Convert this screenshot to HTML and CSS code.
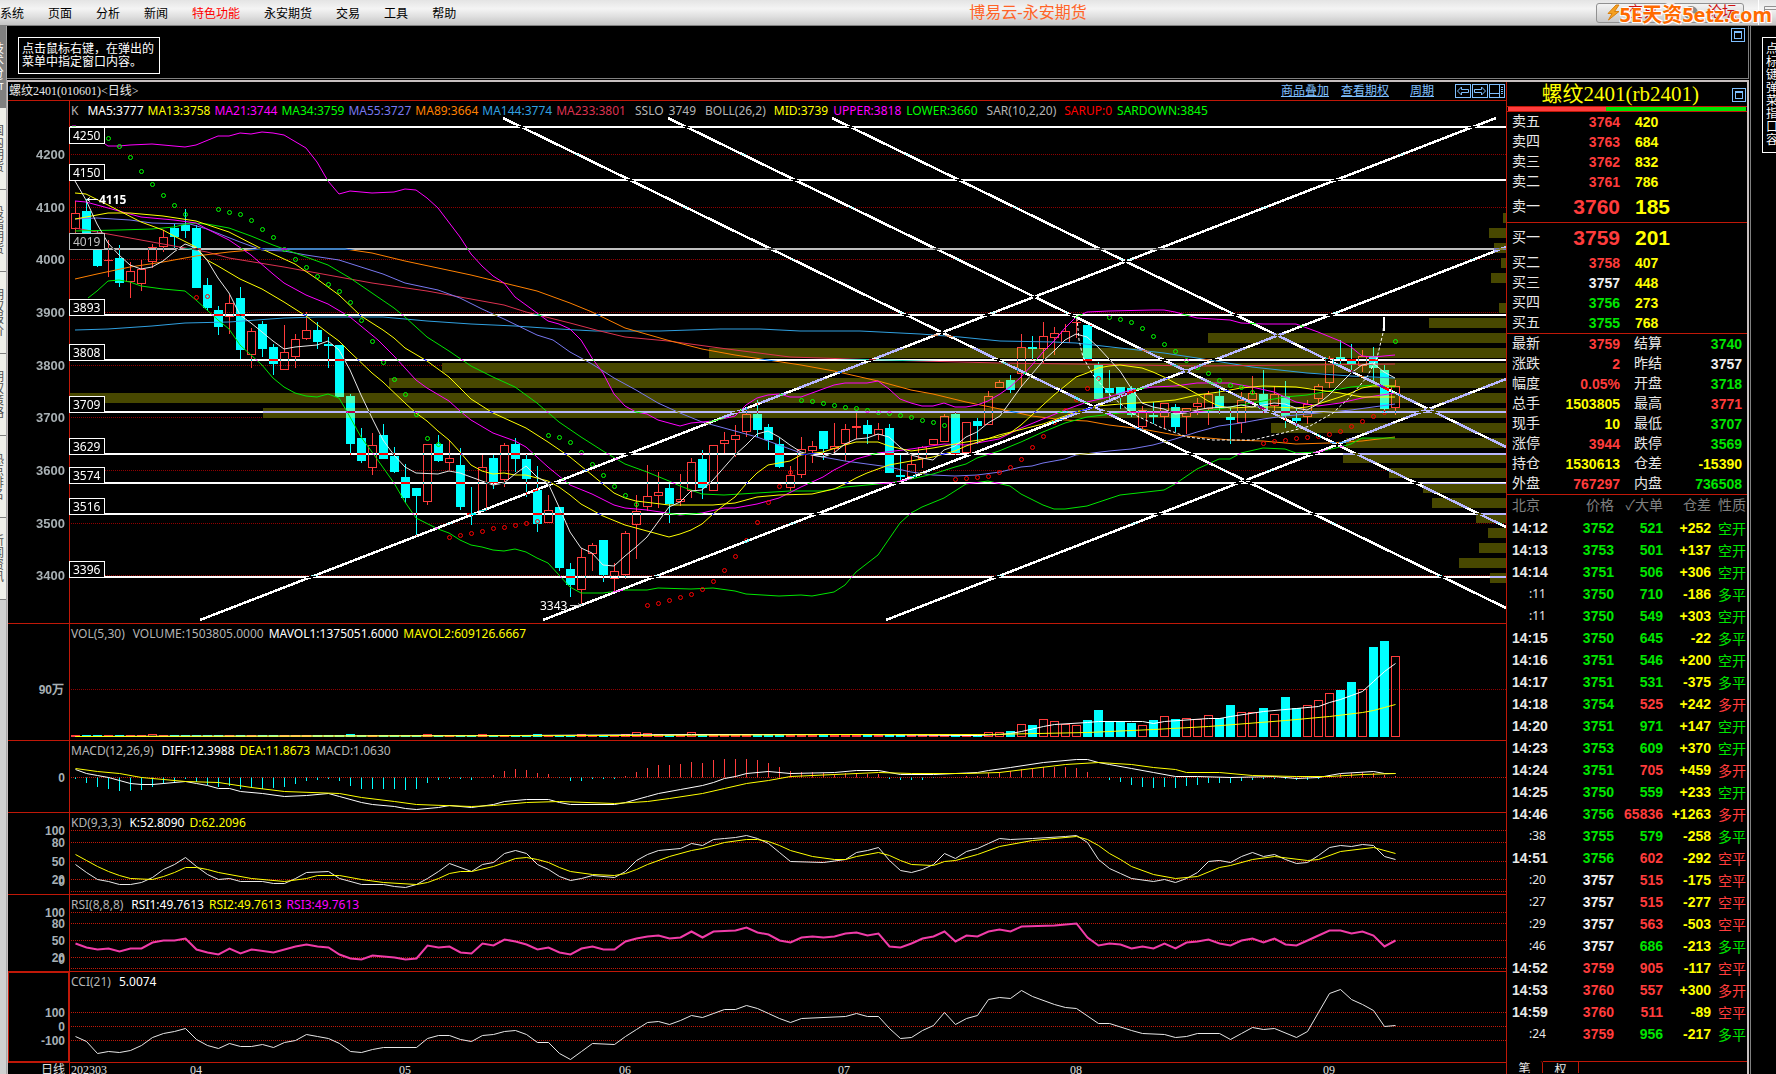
FILE: index.html
```html
<!DOCTYPE html>
<html lang="zh-CN">
<head>
<meta charset="utf-8">
<title>博易云-永安期货</title>
<link rel="stylesheet" href="styles.css">
</head>
<body>
<header class="menubar">
  <nav class="menu">
    <a href="#">系统</a><a href="#">页面</a><a href="#">分析</a><a href="#">新闻</a><a href="#" class="hot">特色功能</a><a href="#">永安期货</a><a href="#">交易</a><a href="#">工具</a><a href="#">帮助</a>
  </nav>
  <h1 class="app-title">博易云-永安期货</h1>
  <div class="actions">
    <button class="action" type="button">
      <svg width="13" height="18" viewBox="0 0 13 18"><path d="M9 1 1 9.500h4L1.500 16 12 7.500H7.500L12 1z" fill="#f5a020" stroke="#d88010"/></svg>
      <span>交易</span>
    </button>
    <button class="action" type="button">
      <svg width="16" height="16" viewBox="0 0 16 16"><circle cx="8" cy="8" r="7" fill="#8a8a8a"/><circle cx="6" cy="6" r="2.500" fill="#c4c4c4"/><circle cx="11" cy="10" r="2" fill="#b0b0b0"/></svg>
      <span>论坛</span>
    </button>
    <div class="window-tools"><svg width="12" height="14" viewBox="0 0 12 14"><path d="M.5 13.500V.5H12M.5 3.500H12" fill="none" stroke="#909090"/></svg></div>
    <span class="watermark">5E天资5etz.com</span>
  </div>
</header>

<div class="workspace">
  <nav class="rail">
    <a href="#" class="tab active"><span>技术分析</span></a>
    <a href="#" class="tab"><span>国内期货</span></a>
    <a href="#" class="tab"><span>股指期货</span></a>
    <a href="#" class="tab"><span>期权报价</span></a>
    <a href="#" class="tab"><span>期权策略</span></a>
    <a href="#" class="tab"><span>热点排名</span></a>
    <a href="#" class="tab"><span>新闻资讯</span></a>
  </nav>

  <main class="center">
    <section class="blank">
      <p class="hint">点击鼠标右键，在弹出的<br>菜单中指定窗口内容。</p>
      <button class="restore" type="button" aria-label="还原"><svg width="14" height="14" viewBox="0 0 14 14"><rect x="0.500" y="0.500" width="13" height="13"/><rect x="3.500" y="3.500" width="7" height="7"/><path d="M3 4.500h8"/></svg></button>
    </section>

    <div class="terminal">
      <section class="charts">
        <div class="chart-bar">
          <h2>螺纹2401(010601)&lt;日线&gt;</h2>
          <div class="tools">
            <a href="#">商品叠加</a><a href="#">查看期权</a><a href="#" class="period">周期</a>
            <div class="icons">
              <button type="button" aria-label="左移"><svg width="16" height="14" viewBox="0 0 16 14"><rect x="0.500" y="0.500" width="15" height="13"/><path d="M2.500 7 6.500 3v2.500h7v3h-7V11z"/></svg></button>
              <button type="button" aria-label="右移"><svg width="16" height="14" viewBox="0 0 16 14"><rect x="0.500" y="0.500" width="15" height="13"/><path d="M13.500 7 9.500 3v2.500h-7v3h7V11z"/></svg></button>
              <button type="button" aria-label="布局"><svg width="16" height="14" viewBox="0 0 16 14"><rect x="0.500" y="0.500" width="15" height="13"/><path d="M10.500 0v14M0 9.500h10M12 3.500h2M12 5.500h2M12 7.500h2M12 9.500h2"/></svg></button>
            </div>
          </div>
        </div>

        <div class="panel">
          <svg id="kline" viewBox="8 101 1498 522"></svg>
          <div class="legend first">
            <span class="grey">K</span>
            <span class="set averages"><span class="white">MA5:3777</span><span class="yellow">MA13:3758</span><span class="magenta">MA21:3744</span><span class="green">MA34:3759</span><span class="violet">MA55:3727</span><span class="orange">MA89:3664</span><span class="blue">MA144:3774</span><span class="crimson">MA233:3801</span></span>
            <span class="set"><span class="grey">SSLO</span><span class="grey">3749</span></span>
            <span class="set"><span class="grey name">BOLL(26,2)</span><span class="yellow">MID:3739</span><span class="magenta">UPPER:3818</span><span class="green">LOWER:3660</span></span>
            <span class="set"><span class="grey name">SAR(10,2,20)</span><span class="red">SARUP:0</span><span class="green">SARDOWN:3845</span></span>
          </div>
        </div>
        <div class="panel">
          <svg id="vol" viewBox="8 624 1498 116"></svg>
          <div class="legend"><span class="grey name">VOL(5,30)</span><span class="grey">VOLUME:1503805.0000</span><span class="white">MAVOL1:1375051.6000</span><span class="yellow">MAVOL2:609126.6667</span></div>
        </div>
        <div class="panel">
          <svg id="macd" viewBox="8 741 1498 71"></svg>
          <div class="legend"><span class="grey name">MACD(12,26,9)</span><span class="white">DIFF:12.3988</span><span class="yellow">DEA:11.8673</span><span class="grey">MACD:1.0630</span></div>
        </div>
        <div class="panel">
          <svg id="kd" viewBox="8 813 1498 81"></svg>
          <div class="legend"><span class="grey name">KD(9,3,3)</span><span class="white">K:52.8090</span><span class="yellow">D:62.2096</span></div>
        </div>
        <div class="panel">
          <svg id="rsi" viewBox="8 895 1498 76"></svg>
          <div class="legend"><span class="grey name">RSI(8,8,8)</span><span class="white">RSI1:49.7613</span><span class="yellow">RSI2:49.7613</span><span class="magenta">RSI3:49.7613</span></div>
        </div>
        <div class="panel">
          <svg id="cci" viewBox="8 972 1498 90"></svg>
          <div class="legend"><span class="grey name">CCI(21)</span><span class="white">5.0074</span></div>
        </div>
        <svg class="dates" id="dates" viewBox="8 1063 1498 11"></svg>
      </section>

      <aside class="quote">
        <div class="quote-head">
          <h2>螺纹2401(rb2401)</h2>
          <button class="restore" type="button" aria-label="还原"><svg width="14" height="14" viewBox="0 0 14 14"><rect x="0.500" y="0.500" width="13" height="13"/><rect x="3.500" y="3.500" width="7" height="7"/><path d="M3 4.500h8"/></svg></button>
        </div>
        <div class="ratio"><i class="bid"></i><i class="ask"></i></div>
        <table class="book">
          <tr><th>卖五</th><td class="r">3764</td><td class="y">420</td></tr>
          <tr><th>卖四</th><td class="r">3763</td><td class="y">684</td></tr>
          <tr><th>卖三</th><td class="r">3762</td><td class="y">832</td></tr>
          <tr><th>卖二</th><td class="r">3761</td><td class="y">786</td></tr>
          <tr class="best"><th>卖一</th><td class="r">3760</td><td class="y">185</td></tr>
        </table>
        <table class="book">
          <tr class="best"><th>买一</th><td class="r">3759</td><td class="y">201</td></tr>
          <tr><th>买二</th><td class="r">3758</td><td class="y">407</td></tr>
          <tr><th>买三</th><td class="w">3757</td><td class="y">448</td></tr>
          <tr><th>买四</th><td class="g">3756</td><td class="y">273</td></tr>
          <tr><th>买五</th><td class="g">3755</td><td class="y">768</td></tr>
        </table>
        <table class="stats">
          <tr><th>最新</th><td class="r">3759</td><th>结算</th><td class="g">3740</td></tr>
          <tr><th>涨跌</th><td class="r">2</td><th>昨结</th><td class="w">3757</td></tr>
          <tr><th>幅度</th><td class="r">0.05%</td><th>开盘</th><td class="g">3718</td></tr>
          <tr><th>总手</th><td class="y">1503805</td><th>最高</th><td class="r">3771</td></tr>
          <tr><th>现手</th><td class="y">10</td><th>最低</th><td class="g">3707</td></tr>
          <tr><th>涨停</th><td class="r">3944</td><th>跌停</th><td class="g">3569</td></tr>
          <tr><th>持仓</th><td class="y">1530613</td><th>仓差</th><td class="y">-15390</td></tr>
          <tr><th>外盘</th><td class="r">767297</td><th>内盘</th><td class="g">736508</td></tr>
        </table>
        <table class="ticks">
          <thead><tr><th>北京</th><th>价格</th><th>✓大单</th><th>仓差</th><th>性质</th></tr></thead>
          <tbody>
          <tr><td>14:12</td><td class="g">3752</td><td class="g">521</td><td>+252</td><td class="g">空开</td></tr>
          <tr><td>14:13</td><td class="g">3753</td><td class="g">501</td><td>+137</td><td class="g">空开</td></tr>
          <tr><td>14:14</td><td class="g">3751</td><td class="g">506</td><td>+306</td><td class="g">空开</td></tr>
          <tr><td class="sec">:11</td><td class="g">3750</td><td class="g">710</td><td>-186</td><td class="g">多平</td></tr>
          <tr><td class="sec">:11</td><td class="g">3750</td><td class="g">549</td><td>+303</td><td class="g">空开</td></tr>
          <tr><td>14:15</td><td class="g">3750</td><td class="g">645</td><td>-22</td><td class="g">多平</td></tr>
          <tr><td>14:16</td><td class="g">3751</td><td class="g">546</td><td>+200</td><td class="g">空开</td></tr>
          <tr><td>14:17</td><td class="g">3751</td><td class="g">531</td><td>-375</td><td class="g">多平</td></tr>
          <tr><td>14:18</td><td class="g">3754</td><td class="r">525</td><td>+242</td><td class="r">多开</td></tr>
          <tr><td>14:20</td><td class="g">3751</td><td class="g">971</td><td>+147</td><td class="g">空开</td></tr>
          <tr><td>14:23</td><td class="g">3753</td><td class="g">609</td><td>+370</td><td class="g">空开</td></tr>
          <tr><td>14:24</td><td class="g">3751</td><td class="r">705</td><td>+459</td><td class="r">多开</td></tr>
          <tr><td>14:25</td><td class="g">3750</td><td class="g">559</td><td>+233</td><td class="g">空开</td></tr>
          <tr><td>14:46</td><td class="g">3756</td><td class="r">65836</td><td>+1263</td><td class="r">多开</td></tr>
          <tr><td class="sec">:38</td><td class="g">3755</td><td class="g">579</td><td>-258</td><td class="g">多平</td></tr>
          <tr><td>14:51</td><td class="g">3756</td><td class="r">602</td><td>-292</td><td class="r">空平</td></tr>
          <tr><td class="sec">:20</td><td class="w">3757</td><td class="r">515</td><td>-175</td><td class="r">空平</td></tr>
          <tr><td class="sec">:27</td><td class="w">3757</td><td class="r">515</td><td>-277</td><td class="r">空平</td></tr>
          <tr><td class="sec">:29</td><td class="w">3757</td><td class="r">563</td><td>-503</td><td class="r">空平</td></tr>
          <tr><td class="sec">:46</td><td class="w">3757</td><td class="g">686</td><td>-213</td><td class="g">多平</td></tr>
          <tr><td>14:52</td><td class="r">3759</td><td class="r">905</td><td>-117</td><td class="r">空平</td></tr>
          <tr><td>14:53</td><td class="r">3760</td><td class="r">557</td><td>+300</td><td class="r">多开</td></tr>
          <tr><td>14:59</td><td class="r">3760</td><td class="r">511</td><td>-89</td><td class="r">空平</td></tr>
          <tr><td class="sec">:24</td><td class="r">3759</td><td class="g">956</td><td>-217</td><td class="g">多平</td></tr>
          </tbody>
        </table>
        <div class="quote-tabs"><button type="button" class="on">笔</button><button type="button">权</button><i></i></div>
      </aside>
    </div>
  </main>

  <aside class="side"><p class="side-hint">点<br>标<br>键<br>弹<br>菜<br>指<br>口<br>容</p></aside>
</div>
<script src="charts.js"></script>
</body>
</html>
```

FILE: styles.css
```css
* { box-sizing: border-box; }
body {
  margin: 0;
  min-height: 100vh;
  background: #000;
  color: #e8e8e8;
  font: 12px/13px "Liberation Serif", "Noto Sans CJK SC", sans-serif;
  overflow: hidden;
}
h1, h2, p { margin: 0; font-weight: 400; }
a { color: inherit; text-decoration: none; }
button { margin: 0; padding: 0; border: 0; background: none; font: inherit; color: inherit; display: block; }
table { border-collapse: collapse; table-layout: fixed; width: 100%; }
th, td { padding: 0; font-weight: 400; text-align: left; white-space: nowrap; }
svg { display: block; }

.menubar {
  height: 26px;
  display: flex;
  align-items: center;
  background: linear-gradient(#e4e4e4, #f4f4f4 35%, #e0e0e0 65%, #c4c4c4);
  border-bottom: 1px solid #808080;
  color: #000;
  position: relative;
}
.menu { display: flex; gap: 24px; white-space: nowrap; width: 456px; padding-top: 3px; }
.menu .hot { color: #f00; }
.app-title { flex: 1; text-align: center; font-size: 16px; line-height: 24px; color: #ff6428; padding-left: 4px; }
.actions { display: flex; gap: 4px; align-items: center; width: 180px; }
.action {
  width: 73px;
  height: 20px;
  display: flex;
  align-items: center;
  gap: 8px;
  padding-left: 10px;
  border: 1px solid #909090;
  border-radius: 3px;
  background: linear-gradient(#f4f4f4, #c8c8c8);
  color: #d01010;
  font-size: 15px;
}
.window-tools { margin-left: 10px; padding-left: 5px; border-left: 1px solid #fff; height: 25px; display: flex; align-items: center; }
.watermark {
  position: absolute;
  right: 4px;
  top: 1px;
  font: 700 20px/28px "Noto Sans", "Noto Sans CJK SC", sans-serif;
  color: #ff6a00;
  text-shadow: 1px 1px 0 #fff, -1px 1px 0 #fff, 1px -1px 0 #fff;
}

.workspace { display: flex; min-height: calc(100vh - 26px); }
.rail { width: 7px; flex: none; background: #d0d0d0; border-right: 1px solid #a8a8a8; overflow: hidden; }
.tab {
  height: 82px;
  display: flex;
  align-items: center;
  overflow: hidden;
  background: #f0f0ea;
  color: #505050;
  border-bottom: 1px solid #808080;
}
.tab span { width: 12px; flex: none; margin-left: -8px; line-height: 12px; overflow-wrap: anywhere; word-break: break-all; }
.tab.active { background: #808080; color: #fff; }

.center { flex: 1; min-width: 0; padding-right: 1px; display: flex; flex-direction: column; }
.blank {
  height: 53px;
  margin-bottom: 1px;
  display: flex;
  justify-content: space-between;
  align-items: flex-start;
  border-bottom: 1px solid #808080;
  border-right: 1px solid #808080;
}
.hint { margin: 11px 0 0 11px; border: 1px solid #fff; padding: 5px 3px 4px; width: 142px; color: #fff; white-space: nowrap; }
.restore { margin: 2px 3px 0 0; }
.restore svg, .icons svg { fill: none; stroke: #80c0ff; }

.terminal {
  flex: 1;
  display: grid;
  grid-template-columns: minmax(0, 1fr) 241px;
  border: solid #c8c0c0;
  border-width: 2px 2px 0 1px;
}
.charts { min-width: 0; }
.chart-bar { height: 19px; border-bottom: 1px solid #c01808; display: flex; justify-content: space-between; align-items: center; }
.chart-bar h2 { font-size: 12px; padding-left: 1px; }
.tools { display: flex; align-items: center; gap: 12px; color: #80c0ff; padding-right: 1px; }
.tools a { text-decoration: underline; }
.tools .period { margin: 0 9px; }
.icons { display: flex; gap: 1px; }

.panel { display: grid; border-bottom: 1px solid #c01808; }
.panel > svg, .legend { grid-area: 1 / 1; }
.panel svg, .dates { width: 100%; isolation: isolate; background: #000; }
.legend { z-index: 1; align-self: start; display: flex; gap: 5px; padding-left: 63px; font: 12px/19px "Noto Sans", sans-serif; white-space: nowrap; }
.legend.first { gap: 9px; }
.set { display: flex; gap: 5px; }
.set.averages { gap: 4px; }
.name { margin-right: 3px; }
.grey { color: #b4b4b4; }
.white { color: #fff; }
.yellow { color: #ff0; }
.magenta { color: #f0f; }
.green { color: #0f0; }
.violet { color: #7878f0; }
.orange { color: #ff8000; }
.blue { color: #30a0e0; }
.crimson { color: #dc3250; }
.red { color: #f00; }

.frame { stroke: #c01808; fill: none; shape-rendering: crispEdges; }
.grid { stroke: #c01808; stroke-dasharray: 1 1; shape-rendering: crispEdges; }
.grid.dim { stroke: #900000; }
.scale { fill: #a8b0b4; font: 700 12px "Liberation Sans", sans-serif; text-anchor: end; }
.scale.price { font-size: 13px; }
.zone { fill: #484800; shape-rendering: crispEdges; }
.level { fill: #fff; mix-blend-mode: difference; shape-rendering: crispEdges; }
.level.soft { fill: #c0c0c0; }
.trend { stroke: #fff; mix-blend-mode: difference; shape-rendering: crispEdges; }
.tag rect { fill: #000; stroke: #fff; shape-rendering: crispEdges; }
.tag text, .note { fill: #fff; font: 12px "Noto Sans", sans-serif; }
.note.strong { font-weight: 700; }
.tag.soft rect { stroke: #c0c0c0; }
.tag.soft text { fill: #c0c0c0; }
.curve { fill: none; stroke-width: 1; }
.curve.thick { stroke-width: 2; }
.up { fill: none; stroke: #ff3c3c; shape-rendering: crispEdges; }
.down { fill: #0ff; stroke: #0ff; shape-rendering: crispEdges; }
.tinted .up { stroke: #ff7030; }
.tinted .down { fill: #48ffb8; stroke: #48ffb8; }
.sar { fill: none; stroke-width: 1; }
.dates text { fill: #e0e0e0; font: 12px "Liberation Serif", "Noto Sans CJK SC", sans-serif; }

.quote { border-left: 1px solid #c01808; font-size: 14px; }
.quote-head { height: 25px; display: flex; justify-content: flex-end; border-bottom: 1px solid #c01808; }
.quote-head h2 { font-size: 21px; line-height: 25px; color: #ff0; margin-right: 33px; white-space: nowrap; }
.quote-head .restore { margin: 1px 1px 0 0; }
.ratio { display: flex; height: 5px; padding: 0 1px; border-bottom: 1px solid #c01808; }
.ratio .bid { flex: 41; background: #ff3c3c; }
.ratio .ask { flex: 59; background: #00e600; }
.quote td { font-family: "Liberation Sans", sans-serif; font-weight: 700; }
.quote th { padding-left: 5px; color: #e8e8e8; }
.quote .r { color: #ff3c3c; }
.quote .y { color: #ff0; }
.quote .g { color: #00e600; }
.quote .w { color: #f0f0f0; }
.book tr, .stats tr { height: 20px; line-height: 20px; }
.book { border-bottom: 1px solid #c01808; }
.book th { width: 48px; }
.book td:nth-child(2) { width: 65px; text-align: right; }
.book td:nth-child(3) { padding-left: 15px; }
.book .best { height: 30px; line-height: 30px; }
.book .best td { font-size: 21px; }
.stats { border-bottom: 1px solid #c01808; }
.stats th:nth-child(1) { width: 40px; }
.stats td:nth-child(2) { width: 73px; text-align: right; }
.stats th:nth-child(3) { width: 54px; padding-left: 14px; }
.stats td:nth-child(4) { text-align: right; padding-right: 5px; }
.ticks tr { height: 22px; line-height: 22px; }
.quote .ticks th { color: #808080; text-align: right; padding: 0; }
.ticks th:nth-child(1) { width: 50px; }
.quote .ticks th:nth-child(1) { text-align: left; padding-left: 5px; }
.ticks th:nth-child(2) { width: 57px; }
.ticks th:nth-child(3) { width: 49px; }
.ticks th:nth-child(4) { width: 48px; }
.quote .ticks th:nth-child(5) { padding-right: 1px; }
.ticks td { text-align: right; }
.ticks td:nth-child(1) { text-align: left; padding-left: 5px; }
.ticks td.sec { font: 12px/22px "Noto Sans", sans-serif; padding-left: 22px; }
.ticks td:nth-child(4) { color: #ff0; }
.ticks td:nth-child(5) { font: 14px/22px "Noto Sans CJK SC", sans-serif; padding-right: 1px; }
.quote-tabs { display: flex; margin-top: 16px; font-size: 12px; line-height: 16px; height: 12px; overflow: hidden; }
.quote-tabs button { width: 36px; border: solid #c01808; border-width: 1px 1px 0 0; color: #e8e8e8; line-height: 16px; }
.quote-tabs .on { border-top: 0; border-radius: 0 3px 0 0; }
.quote-tabs i { flex: 1; border-top: 1px solid #c01808; }

.side { width: 26px; flex: none; border-left: 1px solid #808080; overflow: hidden; padding: 11px 0 0 11px; }
.side-hint { border: 1px solid #fff; width: 40px; padding: 5px 3px; color: #fff; }
```

FILE: charts.js
```js
const NS = 'http://www.w3.org/2000/svg';
const cx = i => 75.5 + 11 * i;

function add(parent, tag, attrs, text) {
  const el = document.createElementNS(NS, tag);
  for (const k in attrs) el.setAttribute(k, attrs[k]);
  if (text !== undefined) el.textContent = text;
  parent.appendChild(el);
  return el;
}
const byId = id => document.getElementById(id);
const label = (svg, y, text, cls = 'scale') => add(svg, 'text', { class: cls, x: 65, y: y + 4 }, text);
const grid = (svg, y, cls = 'grid') => add(svg, 'path', { class: cls, d: `M71 ${y + .5}H1506` });
const axis = (svg, a, b) => add(svg, 'path', { class: 'frame', d: `M69.5 ${a}V${b}` });

// series given as "x,y x,y"
const curve = (svg, points, color) => add(svg, 'polyline', { class: 'curve', points, stroke: color });
// series given as "index,y index,y"
function series(svg, data, color) {
  const points = data.trim().split(/\s+/).map(p => {
    const [i, y] = p.split(',').map(Number);
    return `${cx(i)},${y + .5}`;
  }).join(' ');
  return curve(svg, points, color);
}

// ---- candles: type top bottom high low, one entry per trading day
const candles = `r213,229,201,233|c211,233,199,234|c249,266,230,267|r260,260,240,277|c258,283,245,287|r271,282,262,298|r269,284,260,291|r247,262,244,268|r237,247,230,252|c228,237,224,249|c225,231,209,238|c228,288,225,288|c285,308,278,311|c310,327,306,335|r303,317,295,334|c298,350,287,359|r331,355,328,368|c324,349,321,357|c347,364,344,375|r352,370,325,370|r339,357,334,368|r330,339,312,340|c330,342,322,349|c344,346,337,368|c345,397,345,397|c396,444,394,455|c438,461,428,463|r445,468,433,475|c435,459,424,459|c456,472,447,473|c477,498,464,503|c488,496,488,536|r444,502,444,505|c444,461,435,462|r458,463,441,470|c465,507,448,510|c513,515,487,525|r467,511,455,511|c458,483,455,489|r445,480,443,487|c444,459,438,472|c459,479,454,497|c490,524,466,532|r510,523,495,523|c507,568,507,571|c569,585,563,597|r557,590,548,605|r545,554,543,571|c540,575,540,582|r571,579,563,591|r533,575,531,579|r511,525,495,559|r496,507,465,511|r492,496,472,508|c488,504,484,523|r499,502,474,506|r462,491,458,498|c459,488,450,499|r445,491,445,491|r440,444,432,453|r435,440,425,457|r414,432,407,437|c414,430,400,437|c427,440,424,450|c444,467,438,468|r475,488,466,491|r449,475,437,478|r446,451,441,463|c431,449,431,460|r446,449,423,453|r429,444,424,461|r426,428,413,439|c425,434,420,444|r429,435,423,440|c428,473,424,473|c475,477,455,481|r464,477,456,477|r447,459,446,468|r439,445,439,445|r416,442,414,442|c414,454,412,455|r422,453,422,453|c421,426,418,444|r396,425,391,425|r382,388,380,388|c380,390,375,393|r347,374,334,387|c347,349,336,360|r336,349,322,363|r333,338,327,355|r331,343,324,343|r322,323,318,338|c325,361,325,361|c365,399,362,399|c388,393,370,399|c387,395,387,409|c388,415,386,417|r410,427,406,430|c415,417,402,424|r403,417,403,428|c407,427,404,432|r408,417,408,434|r403,407,398,415|r394,409,391,425|c396,408,388,414|c417,420,408,444|r400,423,392,433|r393,400,376,400|c394,409,370,413|r394,406,386,412|c396,416,381,428|c418,421,408,428|r404,417,400,424|r386,399,384,403|r358,383,356,388|c357,359,340,365|c359,364,344,372|r356,366,350,372|c356,368,347,381|c370,409,365,412|r386,408,380,415`
  .split('|').map(s => ({ up: s[0] === 'r', v: s.slice(1).split(',').map(Number) }));

function drawCandles(parent) {
  candles.forEach(({ up, v: [top, bottom, high, low] }, i) => {
    const x = cx(i);
    const wick = `M${x} ${high}V${top}M${x} ${bottom}V${low}`;
    if (up) {
      const body = bottom - top < 2 ? `M${x - 4.5} ${top + .5}H${x + 4.5}` : `M${x - 4} ${top + .5}H${x + 4}V${bottom - .5}H${x - 4}Z`;
      add(parent, 'path', { class: 'up', d: wick + body });
    } else {
      add(parent, 'path', { class: 'down', d: wick });
      add(parent, 'rect', { class: 'down', x: x - 4.5, y: top, width: 9, height: bottom - top, 'stroke-width': 0 });
    }
  });
}

// ---- price panel
const k = byId('kline');
axis(k, 101, 623);
[[4200, 154], [4100, 207], [4000, 259], [3900, 312], [3800, 365], [3700, 417], [3600, 470], [3500, 523], [3400, 575]]
  .forEach(([p, y]) => { grid(k, y, 'grid dim'); label(k, y + 1, p, 'scale price'); });

// volume-by-price bars: left edge, top
const zones = [[1503, 213], [1489, 228], [1494, 243], [1501, 258], [1491, 273], [1499, 303], [1429, 318], [1208, 333], [709, 348], [442, 363], [389, 378], [70, 393], [263, 408], [1271, 423], [1346, 438], [1343, 453], [1389, 468], [1423, 483], [1432, 498], [1476, 513], [1488, 528], [1479, 543], [1459, 558], [1490, 573]];
const clip = add(k, 'clipPath', { id: 'zones' });
zones.forEach(([x, y]) => {
  const r = { class: 'zone', x, y, width: 1506 - x, height: 10 };
  add(k, 'rect', r);
  add(clip, 'rect', r);
});
drawCandles(add(k, 'g', {}));
drawCandles(add(k, 'g', { class: 'tinted', 'clip-path': 'url(#zones)' }));

curve(k, '75,330 108,329 152,326 185,323 229,322 284,318 317,317 383,317 427,321 471,324 515,326 559,329 595,331 660,331 720,329 760,329 800,331 860,331 920,334 960,337 1000,341 1054,342 1076,343 1120,348 1164,353 1197,358 1252,367 1307,373 1351,376 1395,378', '#30a0e0');
curve(k, '75,228 119,236 163,244 207,252 229,258 284,267 328,275 372,283 427,291 471,299 504,305 526,312 570,323 600,331 625,337 668,341 735,350 790,357 850,359 920,361 1000,363 1076,364 1197,366 1300,365 1395,364', '#dc3250');
curve(k, '75,279 97,274 130,267 163,262 196,256 229,252 262,249 295,249 345,249 372,253 405,261 438,268 471,275 504,283 537,291 570,303 592,312 625,328 667,340 702,349 735,355 768,360 801,365 834,371 878,381 911,390 933,394 966,402 1000,409 1032,416 1065,420 1087,421 1109,425 1142,429 1175,435 1197,437 1230,440 1263,441 1296,444 1329,443 1362,441 1395,437', '#ff8000');
curve(k, '75,219 97,218 130,220 152,223 190,224 207,229 240,242 262,250 284,251 306,255 339,260 361,267 383,274 405,283 438,290 460,298 482,309 504,319 537,335 553,340 570,352 592,364 614,378 636,390 658,403 680,413 702,422 735,431 757,437 779,445 801,453 823,457 845,461 867,464 889,467 911,472 933,475 955,476 977,475 1000,472 1021,467 1032,466 1043,463 1065,459 1076,455 1109,451 1131,449 1153,445 1175,439 1197,432 1219,426 1241,423 1263,419 1285,416 1307,414 1329,412 1351,410 1373,407 1395,404', '#7878f0');
curve(k, '75,231 119,230 152,229 174,227 190,223 207,224 229,228 251,236 273,245 295,253 328,265 350,278 372,293 394,308 405,317 427,337 449,351 471,366 493,377 515,387 537,403 559,422 581,437 603,451 625,464 647,472 669,481 680,486 702,494 724,495 757,493 790,491 823,491 845,487 867,485 889,483 911,479 933,474 955,467 966,464 977,458 999,451 1021,442 1043,432 1065,423 1087,417 1120,413 1164,412 1197,412 1219,409 1241,405 1263,401 1285,397 1307,395 1329,391 1351,387 1373,385 1395,387', '#00e600');
curve(k, '88,298 97,291 108,281 119,280 130,282 141,286 163,289 185,291 196,300 218,320 229,329 240,345 262,365 273,378 284,387 295,393 306,396 317,397 328,394 339,398 350,417 361,437 372,452 394,483 405,502 416,518 438,529 449,533 460,540 471,545 482,547 493,550 504,551 515,549 526,552 537,558 548,563 559,575 570,587 581,593 603,593 625,590 647,590 658,588 691,589 713,588 735,591 746,594 779,596 801,595 812,596 834,592 845,585 856,572 878,555 900,523 911,513 922,507 944,498 966,484 988,481 1010,486 1021,494 1043,505 1054,509 1065,509 1087,506 1120,495 1164,490 1175,484 1197,469 1219,459 1230,459 1241,453 1263,448 1285,449 1296,453 1318,452 1340,447 1351,444 1362,438 1395,438', '#00e600');
curve(k, '75,201 86,202 119,211 141,217 174,220 196,223 207,229 229,240 251,255 273,274 284,283 306,295 328,304 350,317 378,340 394,356 416,380 427,388 449,401 460,411 471,420 493,433 515,441 526,447 548,467 570,485 592,494 614,505 625,508 647,510 680,515 702,513 724,508 735,508 757,504 779,498 801,487 823,477 834,470 856,459 878,453 911,449 944,444 966,445 999,439 1021,428 1043,419 1065,410 1087,402 1109,397 1131,390 1153,387 1175,386 1197,383 1230,383 1252,387 1274,392 1296,402 1318,406 1340,403 1362,398 1395,393', '#f0f');
curve(k, '72,126 76,126', '#f0f');
curve(k, '105,144 108,146 119,146 130,145 152,144 163,145 185,147 196,145 218,136 229,136 240,133 251,134 262,132 273,133 284,135 306,148 317,162 328,181 339,194 350,191 372,193 394,192 405,189 416,190 427,198 438,208 460,237 471,254 482,266 493,276 504,283 515,297 537,313 548,321 559,324 570,329 581,340 592,358 603,373 614,394 625,406 636,412 647,414 658,420 669,423 680,426 691,423 713,421 735,416 746,405 757,398 768,395 779,394 790,397 801,397 823,389 834,385 845,383 867,383 878,381 889,389 900,399 911,403 922,406 933,406 944,403 955,407 966,407 977,405 988,401 1000,394 1010,387 1021,377 1032,365 1043,352 1054,341 1065,328 1076,317 1087,312 1109,311 1153,310 1164,310 1175,312 1197,318 1230,320 1241,323 1263,324 1296,324 1318,332 1340,341 1351,347 1362,356 1373,357 1395,355', '#f0f');
curve(k, '75,219 108,213 130,213 163,216 196,221 229,232 262,249 273,254 295,264 317,279 339,295 361,316 383,330 394,338 405,348 427,361 449,377 471,399 493,413 526,428 548,442 570,457 592,475 614,493 625,498 636,501 669,505 713,505 735,503 757,497 779,495 812,494 834,489 845,484 856,478 867,473 889,465 911,461 933,457 955,451 966,446 999,435 1043,424 1076,412 1098,406 1120,404 1153,402 1175,400 1197,395 1219,392 1241,388 1263,386 1296,387 1318,390 1340,393 1362,397 1395,397', '#ff0');
curve(k, '75,193 86,194 108,205 141,222 163,230 174,236 196,247 207,260 218,266 240,279 262,289 284,302 306,316 328,333 339,341 350,352 372,373 383,382 405,403 416,413 427,421 438,431 449,440 460,452 471,465 482,471 493,474 504,473 515,475 526,475 537,478 548,481 559,487 570,495 581,504 603,516 625,525 636,528 658,534 669,537 680,534 691,530 702,524 713,514 724,505 735,497 746,484 757,473 768,465 790,461 801,455 823,452 845,445 856,442 878,442 889,446 911,451 933,448 944,446 966,442 999,437 1010,433 1021,425 1032,415 1043,405 1054,395 1065,386 1076,377 1087,373 1098,368 1109,366 1120,365 1142,368 1153,372 1164,377 1175,383 1186,388 1197,394 1208,401 1219,406 1230,408 1252,407 1274,407 1296,408 1307,407 1318,404 1340,397 1351,393 1362,388 1373,386 1395,386', '#ff0');
curve(k, '75,181 86,200 97,224 108,243 119,255 130,265 141,269 152,267 163,261 174,252 185,244 196,248 207,260 218,278 229,293 240,315 251,323 273,341 284,349 295,347 317,345 328,341 339,350 350,370 361,395 372,418 383,440 394,455 405,467 416,473 438,474 449,471 460,473 471,477 482,481 493,485 504,483 515,474 526,466 537,477 548,483 559,507 570,532 581,548 592,553 603,565 614,566 625,556 636,547 647,537 658,522 669,507 680,502 691,491 702,490 713,480 735,455 746,445 757,434 768,431 779,437 790,445 801,452 812,455 823,457 834,453 845,444 856,439 867,438 878,434 889,437 900,447 911,455 922,458 933,460 944,450 955,446 966,437 977,432 988,423 1000,416 1021,387 1032,374 1043,361 1054,351 1065,340 1076,334 1087,337 1098,347 1109,359 1120,371 1131,388 1142,403 1153,407 1164,409 1175,414 1186,413 1197,410 1208,408 1230,407 1241,405 1252,407 1263,405 1274,403 1285,404 1296,408 1307,410 1318,404 1329,395 1340,384 1351,373 1362,365 1373,363 1384,372 1395,378', '#e8e8e8');

// ---- SAR dots: start index, then one y per day
const sar = [
  ['#00ff00', 3, [138, 146, 157, 171, 184, 195, 205, 214]],
  ['#ff0000', 11, [297, 296]],
  ['#00ff00', 13, [209, 212, 214, 220, 229, 237, 249, 259, 267, 276, 284, 291, 302, 320, 341, 362, 379, 394, 414, 438, 444]],
  ['#ff0000', 34, [537, 535, 533, 531, 528, 527, 525, 523, 521]],
  ['#00ff00', 43, [435, 437, 442, 452, 464, 475, 486, 495, 504]],
  ['#ff0000', 52, [605, 603, 600, 597, 594, 589, 581, 570, 556, 540, 522, 502, 486, 472]],
  ['#00ff00', 66, [400, 401, 403, 405, 407, 408, 410, 412, 413, 415, 417, 420, 422, 425]],
  ['#ff0000', 80, [479, 478, 477, 476, 472, 467, 459, 447, 436, 422, 410, 399, 388, 378]],
  ['#00ff00', 94, [317, 319, 322, 328, 336, 344, 351, 360, 367, 373, 380, 385, 387, 392]],
  ['#ff0000', 108, [443, 441, 440, 438, 437, 436, 434, 431, 426, 421, 416, 412]],
  ['#00ff00', 120, [341]]
];
sar.forEach(([color, start, ys]) => ys.forEach((y, n) =>
  add(k, 'circle', { class: 'sar', cx: cx(start + n), cy: y + .5, r: 2, stroke: color })));

// ---- horizontal levels, trend lines, projected arc
const levels = [[4250, 127], [4150, 180], [4019, 249], [3893, 315], [3808, 360], [3709, 412], [3629, 454], [3574, 483], [3516, 514], [3396, 577]];
levels.forEach(([p, y]) => add(k, 'rect', { class: p === 4019 ? 'level soft' : 'level', x: 70, y: y - 1, width: 1436, height: 2 }));
[[503, 118, 1506, 608], [668, 118, 1506, 527], [832, 118, 1506, 447], [200, 620, 1496, 118], [543, 620, 1506, 247], [886, 620, 1506, 379]]
  .forEach(([x1, y1, x2, y2]) => add(k, 'line', { class: 'trend', 'stroke-width': 2.5, x1, y1, x2, y2 }));
add(k, 'polyline', { class: 'curve', stroke: '#fff', 'stroke-dasharray': '3 2', points: '1077,318 1079,340 1083,357 1093,375 1110,395 1133,414 1160,427 1187,437 1213,440 1253,440 1283,433 1310,426 1333,413 1350,397 1367,377 1377,358 1383,333 1384,317' });
add(k, 'path', { d: 'M1384 317V331', stroke: '#fff', 'stroke-width': 2 });
levels.forEach(([p, y]) => {
  const g = add(k, 'g', { class: p === 4019 ? 'tag soft' : 'tag' });
  const top = p === 4250 ? y : y - 16;
  add(g, 'rect', { x: 69.5, y: top + .5, width: 35, height: 16 });
  add(g, 'text', { x: 73, y: top + 13 }, p);
});
add(k, 'text', { class: 'note strong', x: 99, y: 204 }, '4115');
add(k, 'path', { d: 'M87 199.500h11M87 199.500l3-2M87 199.500l3 2', stroke: '#fff', fill: 'none' });
add(k, 'text', { class: 'note', x: 540, y: 610 }, '3343');
add(k, 'path', { d: 'M570 605.500h11M581 605.500l-3-2M581 605.500l-3 2', stroke: '#ccc', fill: 'none' });

// ---- volume
const v = byId('vol');
axis(v, 624, 740);
grid(v, 689, 'grid dim');
add(v, 'text', { class: 'scale', x: 64, y: 694 }, '90万');
const tops = { 7: 734, 25: 734, 30: 735, 32: 734, 37: 734, 42: 734, 46: 734, 50: 734, 51: 732, 52: 733, 53: 734, 56: 732, 57: 734 };
'732 732 731 724 725 719 721 724 725 720 710 722 722 723 725 720 716 719 718 719 715 718 705 712 712 708 714 697 708 705 700 693 690 682 689 647 641 656'
  .split(' ').forEach((y, n) => { tops[83 + n] = +y; });
const hollow = new Set([83, 84, 86, 88, 89, 90, 91, 97, 99, 101, 102, 103, 106, 107, 109, 112, 113, 114, 117, 120]);
for (let i = 0; i <= 120; i++) {
  const y = tops[i] || 735;
  const up = i < 83 ? candles[i].up : hollow.has(i);
  if (up) add(v, 'rect', { class: 'up', x: cx(i) - 4, y: y + .5, width: 8, height: 736 - y });
  else add(v, 'rect', { class: 'down', x: cx(i) - 4.5, y, width: 9, height: 737 - y, 'stroke-width': 0 });
}
series(v, '0,736 40,735 56,734 70,734 82,735 84,734 85,733 86,731 88,726 89,724 92,722 93,721 96,721 97,721 98,723 99,721 103,718 104,718 105,716 108,711 111,708 113,706 114,702 115,699 116,695 117,691 118,681 119,671 120,663', '#fff');
series(v, '0,736 50,735 70,734 83,734 92,732 98,729 103,726 110,720 114,716 117,712 118,710 119,707 120,704', '#ff0');

// ---- MACD
const m = byId('macd');
axis(m, 741, 812);
grid(m, 777);
label(m, 778, '0');
'779 783 787 789 791 791 790 787 784 782 779 782 785 787 786 789 788 789 788 787 784 781 780 779 781 786 789 789 789 789 790 789 783 780 779 779 780 777 775 771 769 770 773 774 778 781 781 779 779 779 776 772 768 765 765 764 762 763 760 759 759 759 760 763 767 771 772 772 773 774 773 773 774 774 779 780 780 780 778 777 777 776 776 773 772 771 769 768 767 767 767 768 772 777 780 782 785 787 788 787 788 786 785 783 783 783 781 780 779 779 779 780 780 779 776 774 773 772 773 775 776'
  .split(' ').forEach((y, i) => add(m, 'path', { d: `M${cx(i)} 777.500V${y}`, stroke: y > 777 ? '#0ff' : '#ff3c3c' }));
series(m, '0,769 1,773 2,775 3,777 4,780 5,783 6,784 7,784 8,783 10,781 11,783 12,785 13,788 14,788 15,791 17,793 19,796 21,795 23,793 24,796 26,802 27,804 29,806 30,808 31,809 33,807 34,805 36,807 38,804 39,801 41,799 43,799 44,802 45,804 49,804 50,802 52,796 53,793 55,789 57,785 58,782 59,778 60,776 61,773 63,771 65,773 69,772 71,770 73,770 75,774 78,774 80,773 82,772 83,770 85,767 88,762 91,759 92,759 93,762 94,764 96,768 98,772 100,776 102,776 105,777 109,776 111,778 113,777 115,773 118,771 119,773 120,773', '#fff');
series(m, '0,768 2,771 4,773 6,777 8,779 10,781 13,782 16,787 19,791 24,793 26,797 29,801 31,804 36,806 38,805 41,802 44,801 49,803 52,801 54,798 57,793 59,788 61,783 63,780 65,776 69,774 73,772 76,773 81,773 84,772 87,768 90,764 93,762 96,764 98,767 100,769 101,772 104,772 107,775 111,776 114,776 117,774 120,773', '#ff0');

// ---- KD
const kd = byId('kd');
axis(kd, 813, 894);
[830, 842, 861, 879, 891].forEach(y => grid(kd, y));
[[831, '100'], [843, '80'], [862, '50'], [880, '20'], [882, '0']].forEach(([y, t]) => label(kd, y, t));
series(kd, '0,864 1,872 2,879 3,881 4,884 5,884 6,882 7,877 8,869 9,864 10,857 11,866 12,874 13,879 14,878 15,881 17,881 18,883 19,883 20,878 21,872 23,871 24,878 26,884 28,884 29,886 30,887 31,884 32,878 33,871 34,863 36,871 37,864 38,862 39,853 40,850 41,853 42,864 43,869 44,876 45,880 46,878 47,875 49,877 50,871 51,860 52,854 53,850 55,848 56,843 57,845 58,839 59,838 60,837 61,835 62,838 63,843 64,852 65,861 68,862 70,859 71,852 72,850 73,847 74,860 75,870 76,872 77,869 78,864 79,853 80,858 81,851 82,848 83,843 84,838 85,839 87,838 90,836 91,835 92,842 93,859 94,868 95,873 96,878 98,881 99,879 100,882 101,878 102,872 103,861 104,860 105,862 106,856 107,852 108,856 109,854 110,859 111,863 112,862 113,855 114,847 115,845 116,846 117,844 118,845 119,856 120,859', '#e8e8e8');
series(kd, '0,854 1,860 2,866 3,871 4,875 5,878 7,879 8,876 9,872 10,867 11,867 12,869 13,872 16,878 19,881 21,878 22,875 24,875 26,879 28,882 31,884 32,882 33,878 34,873 35,871 36,871 38,866 39,862 40,858 41,857 42,859 43,862 44,867 45,871 47,874 49,875 50,873 51,869 52,864 54,856 56,850 57,848 59,842 61,839 62,839 63,841 64,845 65,850 67,856 69,859 70,859 71,856 73,852 74,855 75,860 76,864 78,865 79,861 80,860 82,854 84,846 87,840 91,836 92,839 93,845 94,853 95,859 96,866 98,874 100,878 102,876 104,867 105,865 107,859 109,856 112,860 113,859 115,851 118,847 120,853', '#ff0');

// ---- RSI: three coincident lines
const r = byId('rsi');
axis(r, 895, 971);
[912, 923, 940, 957, 968].forEach(y => grid(r, y));
[[913, '100'], [924, '80'], [941, '50'], [958, '20'], [960, '0']].forEach(([y, t]) => label(r, y, t));
const rsi = '0,943 1,947 2,949 3,948 4,951 5,948 6,948 7,942 8,940 9,940 10,938 11,949 12,952 13,954 14,948 15,953 16,949 18,952 19,949 20,946 21,944 22,946 23,947 24,954 25,958 26,959 27,955 29,957 30,959 31,958 32,945 33,947 34,946 35,952 36,953 37,943 38,945 39,939 40,941 41,944 42,949 43,947 44,952 45,954 46,948 47,946 48,949 49,949 50,941 51,938 52,936 53,935 54,938 55,937 56,931 57,937 58,931 60,930 61,927 62,932 63,934 64,940 65,942 66,937 67,936 68,937 69,936 70,933 71,932 72,935 73,933 74,946 75,947 76,943 77,938 78,936 79,931 80,941 81,935 82,936 83,931 84,929 85,931 86,926 89,925 91,923 92,937 93,945 94,943 95,944 96,948 97,946 98,948 99,943 100,948 101,942 102,941 103,939 104,943 105,945 106,940 107,938 108,942 109,938 110,944 111,945 112,940 113,935 114,930 115,930 116,933 117,931 118,935 119,946 120,940';
series(r, rsi, '#f03ca8').setAttribute('class', 'curve thick');

// ---- CCI, the selected panel
const c = byId('cci');
axis(c, 972, 1062);
[1012, 1026, 1040].forEach(y => grid(c, y));
[[1013, '100'], [1027, '0'], [1041, '-100']].forEach(([y, t]) => label(c, y, t));
add(c, 'rect', { class: 'frame', x: 8.5, y: 972.5, width: 60, height: 89 });
series(c, '0,1036 1,1041 2,1053 3,1051 4,1052 5,1050 6,1045 7,1037 8,1033 9,1031 10,1028 11,1039 12,1045 13,1048 14,1043 15,1046 16,1046 17,1044 18,1047 19,1042 20,1040 21,1034 22,1036 23,1038 24,1043 25,1051 26,1052 27,1049 28,1047 31,1047 32,1038 33,1035 34,1035 35,1039 36,1041 37,1035 38,1034 39,1031 40,1030 41,1034 42,1042 43,1042 44,1053 45,1059 46,1051 47,1043 49,1044 50,1036 51,1029 52,1022 53,1021 54,1024 55,1020 56,1015 57,1017 58,1013 59,1009 60,1009 61,1005 62,1008 63,1013 64,1018 65,1022 66,1018 70,1016 71,1013 72,1016 73,1016 74,1028 75,1038 76,1037 77,1030 78,1025 79,1012 80,1024 81,1018 82,1015 83,999 84,997 85,998 86,990 87,996 89,1004 90,1007 91,1008 93,1023 94,1023 96,1030 97,1033 99,1034 100,1037 101,1036 102,1033 104,1033 105,1039 106,1033 107,1027 108,1029 109,1028 111,1037 112,1031 113,1012 114,993 115,989 116,999 117,1004 118,1010 119,1026 120,1025', '#e8e8e8');

// ---- date axis
const d = byId('dates');
axis(d, 1063, 1074);
[[41, '日线'], [71, '202303'], [190, '04'], [399, '05'], [619, '06'], [838, '07'], [1070, '08'], [1323, '09']]
  .forEach(([x, t]) => add(d, 'text', { x, y: 1074 }, t));
```
